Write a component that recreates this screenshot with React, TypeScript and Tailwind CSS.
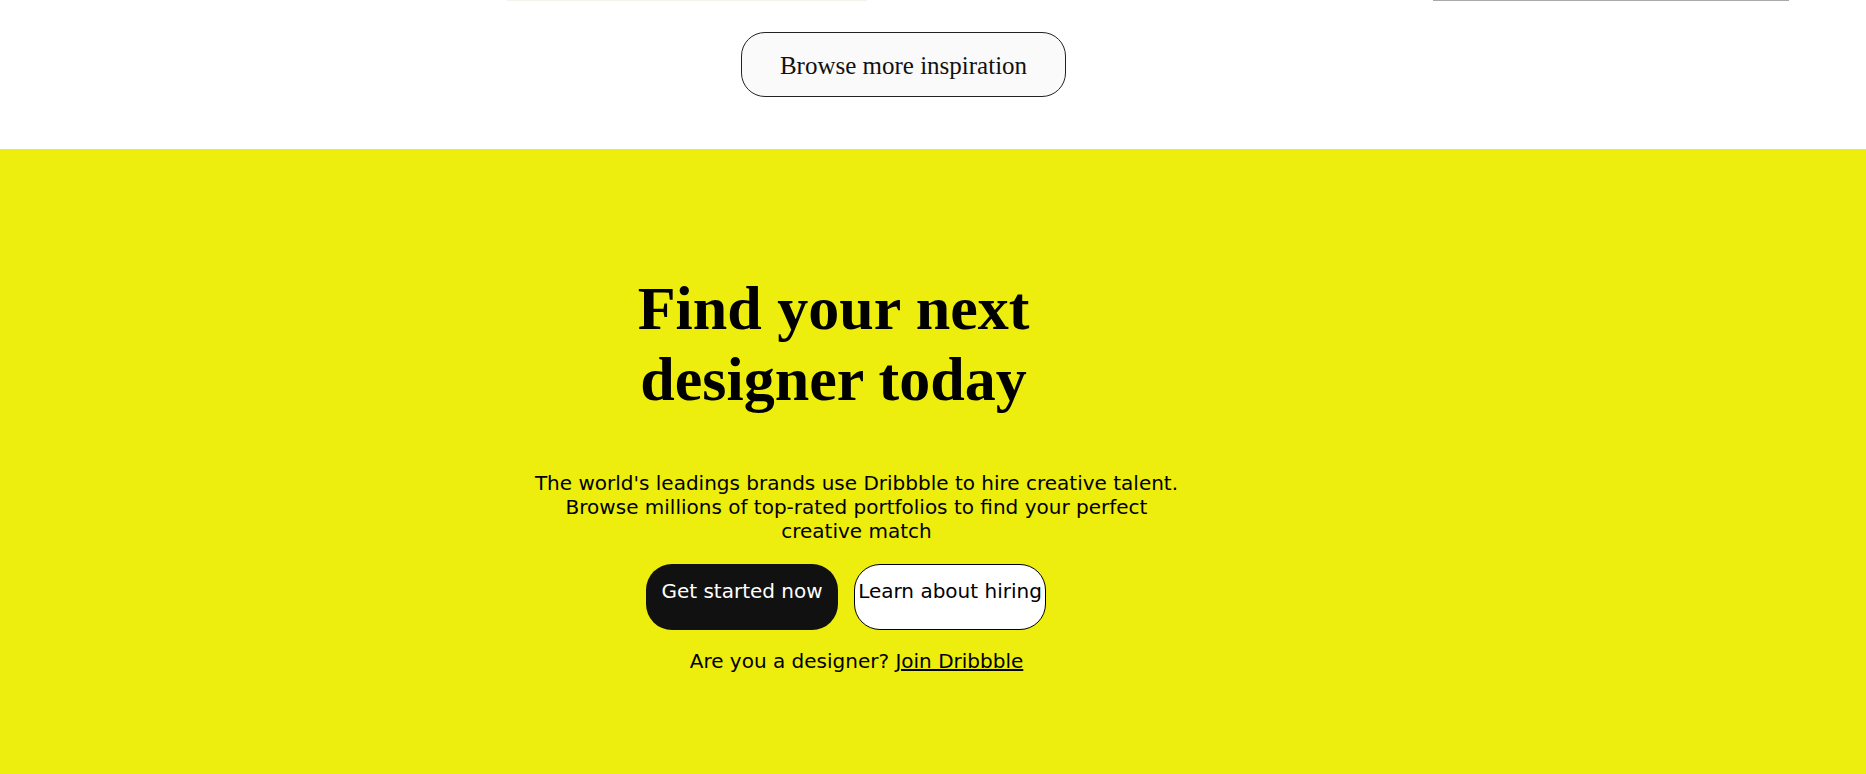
import React from "react";

export default function App() {
  return (
    <div className="w-[1866px] min-h-[774px] bg-white">
      {/* top section */}
      <section className="h-[149px] bg-white flex flex-col">
        <div className="flex h-[1px]">
          <div className="ml-[507px] w-[360px] h-[1px] bg-[#f3f3ea]" />
          <div className="ml-[566px] w-[356px] h-[1px] bg-[#a9a9a9]" />
        </div>
        <div className="flex justify-center pr-[59px] pt-[31px]">
          <button className="rounded-[24px] border border-[#222] bg-[#fafafa] px-[38px] pt-[19px] pb-[16px] text-[25px] leading-[normal] text-[#111] [font-family:'Liberation_Serif',serif]">
            Browse more inspiration
          </button>
        </div>
      </section>

      {/* yellow section */}
      <section className="bg-[#eded0e] min-h-[625px] pt-[124px] pb-[80px]">
        <div className="ml-[529px] w-[655px] flex flex-col [font-family:'DejaVu_Sans',sans-serif] text-black">
          <h1 className="w-[609px] text-center text-[62px] font-bold leading-[normal] [font-family:'Liberation_Serif',serif]">
            Find your next designer today
          </h1>
          <p className="mt-[56px] text-center text-[20px] leading-[normal]">
            The world's leadings brands use Dribbble to hire creative talent. Browse millions of top-rated portfolios to find your perfect creative match
          </p>
          <div className="mt-[21px] flex justify-center gap-4 pr-[21px]">
            <button className="w-[192px] h-[66px] pt-[15px] rounded-[26px] bg-[#111111] text-white text-[20px] leading-[normal] flex justify-center items-start">
              Get started now
            </button>
            <button className="w-[192px] h-[66px] pt-[15px] rounded-[26px] border border-black bg-white text-black text-[20px] leading-[normal] flex justify-center items-start">
              <span className="-mt-px">Learn about hiring</span>
            </button>
          </div>
          <p className="mt-[19px] text-center text-[20px] leading-[normal]">
            Are you a designer? <a href="#" className="underline">Join Dribbble</a>
          </p>
        </div>
      </section>
    </div>
  );
}
